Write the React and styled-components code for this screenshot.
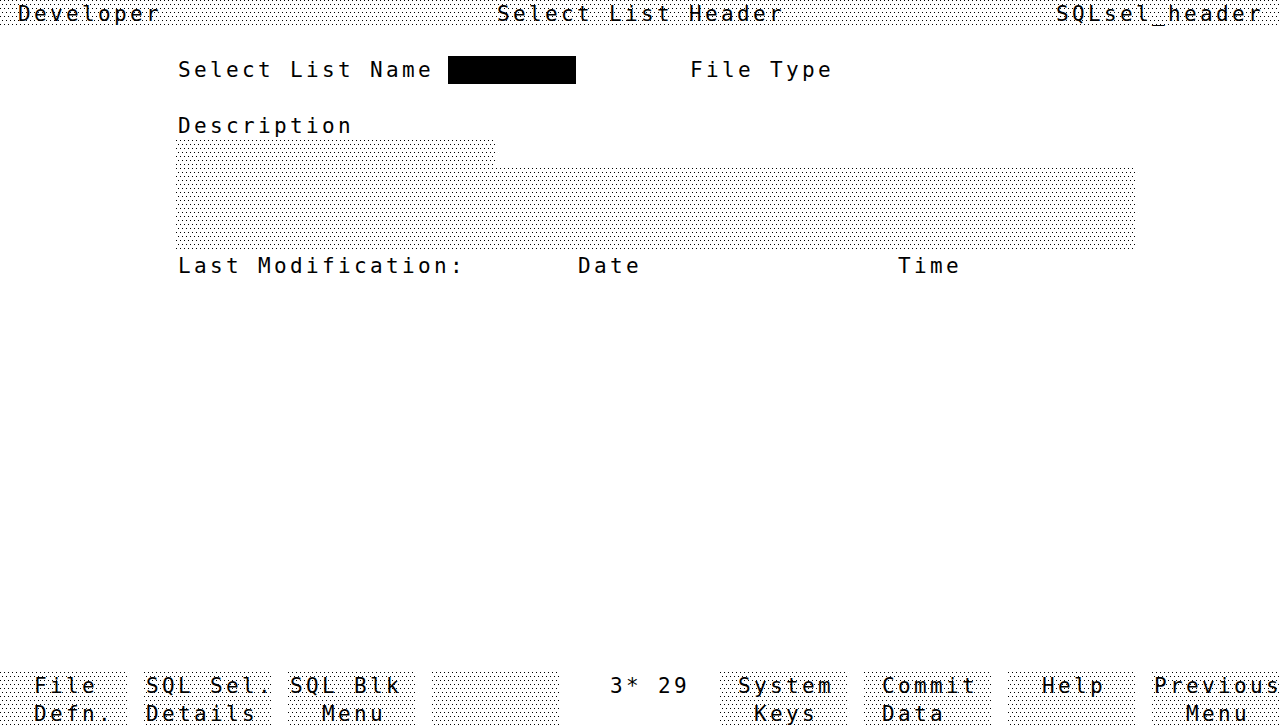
import React from "react";
import styled, { css, createGlobalStyle } from "styled-components";

const GlobalStyle = createGlobalStyle`
  html, body {
    margin: 0;
    padding: 0;
    background: #fff;
    overflow: hidden;
  }
`;

/* half-bright terminal fill: staggered 1px dots */
const dotted = css`
  background-color: #fff;
  background-image: conic-gradient(at 1px 1px, transparent 75%, #000 0),
    conic-gradient(at 1px 1px, transparent 75%, #000 0);
  background-size: 4px 8px;
  background-position: 0 0, 2px 4px;
`;

const Screen = styled.div`
  width: 1280px;
  height: 728px;
  display: flex;
  flex-direction: column;
  color: #000;
  font-family: "DejaVu Sans Mono", "Liberation Mono", monospace;
  font-size: 21px;
  letter-spacing: 3.36px;
  line-height: 28px;
  text-indent: 2px;
  white-space: pre;
`;

const TitleBar = styled.div`
  ${dotted};
  height: 28px;
  padding: 0 16px;
  display: grid;
  grid-template-columns: 1fr auto 1fr;
`;

const TitleLeft = styled.span`
  justify-self: start;
`;

const TitleCenter = styled.span`
  justify-self: center;
`;

const TitleRight = styled.span`
  justify-self: end;
`;

const Form = styled.div`
  display: flex;
  flex-direction: column;
  padding: 28px 0 0 176px;
`;

const Row = styled.div`
  display: flex;
  height: ${(p) => (p.lines || 1) * 28}px;
`;

const Cell = styled.span`
  width: ${(p) => p.cols * 16}px;
  flex: none;
`;

const InputField = styled.span`
  width: ${(p) => p.cols * 16}px;
  height: 28px;
  flex: none;
  background: #000;
`;

const Fill = styled.div`
  ${dotted};
  width: ${(p) => p.cols * 16}px;
  height: ${(p) => (p.lines || 1) * 28}px;
`;

const Spacer = styled.div`
  flex: 1;
`;

const KeyBar = styled.div`
  display: flex;
  gap: 16px;
  height: 56px;
`;

const Key = styled.div`
  ${(p) => (p.blank ? "" : dotted)};
  width: 128px;
  height: 56px;
  flex: none;
  display: flex;
  flex-direction: column;
`;

const softkeys = [
  ["  File  ", "  Defn. "],
  ["SQL Sel.", "Details "],
  ["SQL Blk ", "  Menu  "],
  ["        ", "        "],
  null,
  [" System ", "  Keys  "],
  [" Commit ", " Data   "],
  ["  Help  ", "        "],
  ["Previous", "  Menu  "],
];

export default function App() {
  return (
    <Screen>
      <GlobalStyle />
      <TitleBar>
        <TitleLeft>Developer</TitleLeft>
        <TitleCenter>Select List Header</TitleCenter>
        <TitleRight>SQLsel_header</TitleRight>
      </TitleBar>

      <Form>
        <Row>
          <Cell cols={17}>Select List Name</Cell>
          <InputField cols={8} />
          <Cell cols={7} />
          <Cell cols={10}>File Type</Cell>
        </Row>
        <Row />
        <Row>
          <Cell cols={20}>Description</Cell>
        </Row>
        <Fill cols={20} />
        <Fill cols={60} lines={3} />
        <Row>
          <Cell cols={25}>Last Modification:</Cell>
          <Cell cols={20}>Date</Cell>
          <Cell cols={10}>Time</Cell>
        </Row>
      </Form>

      <Spacer />

      <KeyBar>
        {softkeys.map((k, i) =>
          k ? (
            <Key key={i}>
              <span>{k[0]}</span>
              <span>{k[1]}</span>
            </Key>
          ) : (
            <Key key={i} blank>
              <span>{"  3* 29"}</span>
            </Key>
          )
        )}
      </KeyBar>
    </Screen>
  );
}
